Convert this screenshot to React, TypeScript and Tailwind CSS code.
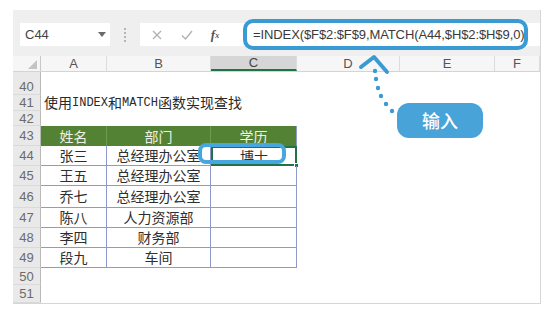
const cjk = '[font-family:"Noto_Sans_CJK_SC","Liberation_Sans",sans-serif]';

const colHeads = [
  { label: 'A', w: 'w-[66px]' },
  { label: 'B', w: 'w-[104px]' },
  { label: 'C', w: 'w-[86px]', active: true },
  { label: 'D', w: 'w-[103px]' },
  { label: 'E', w: 'w-[95px]' },
  { label: 'F', w: 'w-[45px]' },
];

const people = [
  { n: 44, name: '张三', dept: '总经理办公室', edu: '博士', h: 'h-[20px]' },
  { n: 45, name: '王五', dept: '总经理办公室', edu: '', h: 'h-[20px]' },
  { n: 46, name: '乔七', dept: '总经理办公室', edu: '', h: 'h-[22px]' },
  { n: 47, name: '陈八', dept: '人力资源部', edu: '', h: 'h-[20px]' },
  { n: 48, name: '李四', dept: '财务部', edu: '', h: 'h-[20px]' },
  { n: 49, name: '段九', dept: '车间', edu: '', h: 'h-[20px]' },
];

function RowNum({ n, end }: { n: number; end?: boolean }) {
  return (
    <div
      className={`w-[28px] shrink-0 h-full flex justify-center ${end ? 'items-end pb-[1px]' : 'items-center'} bg-[#e9e9e9] border-r border-[#b9b9b9] border-b border-b-[#dadada] text-[13px] leading-none text-[#6b6b6b] [font-family:"Liberation_Sans",sans-serif]`}
    >
      {n}
    </div>
  );
}

export default function App() {
  return (
    <div className="relative w-[554px] h-[314px] bg-white overflow-hidden">
      <div className="absolute left-[13px] top-[10px] w-[528px] h-[294px] flex flex-col border-r border-b border-[#d6d6d6] bg-white">
        {/* formula bar */}
        <div className="h-[46px] shrink-0 bg-[#efefef] flex items-start pt-[13px] pl-[7px]">
          <div className="w-[90px] h-[23px] bg-white flex items-center justify-between pl-[5px] pr-[4px] text-[13px] text-[#444] [font-family:'Liberation_Sans',sans-serif]">
            <span>C44</span>
            <svg width="8" height="5" viewBox="0 0 8 5"><path d="M0 0h8L4 5z" fill="#6a6a6a" /></svg>
          </div>
          <div className="w-[30px] h-[23px] flex flex-col items-center justify-center gap-[2px]">
            <span className="w-[2px] h-[2px] bg-[#b5b5b5]" />
            <span className="w-[2px] h-[2px] bg-[#b5b5b5]" />
            <span className="w-[2px] h-[2px] bg-[#b5b5b5]" />
            <span className="w-[2px] h-[2px] bg-[#b5b5b5]" />
          </div>
          <div className="flex-1 h-[23px] bg-white flex items-center">
            <div className="w-[33px] flex justify-center">
              <svg width="10" height="10" viewBox="0 0 10 10"><path d="M1 1l8 8M9 1l-8 8" stroke="#b0b0b0" strokeWidth="1.3" /></svg>
            </div>
            <div className="w-[28px] flex justify-center">
              <svg width="12" height="10" viewBox="0 0 12 10"><path d="M1 5.5l3.5 3.5L11 1" fill="none" stroke="#b0b0b0" strokeWidth="1.3" /></svg>
            </div>
            <div className="w-[28px] flex justify-center items-end text-[#555] [font-family:'Liberation_Serif',serif] italic font-bold leading-none">
              <span className="text-[13px]">f</span>
              <span className="text-[8px] mb-[1px]">x</span>
            </div>
            <span className="ml-[24px] text-[13px] text-[#3a3a3a] whitespace-nowrap [font-family:'Liberation_Sans',sans-serif] tracking-[-0.1px]">
              =INDEX($F$2:$F$9,MATCH(A44,$H$2:$H$9,0)
            </span>
          </div>
        </div>

        {/* column headers */}
        <div className="h-[16px] shrink-0 flex bg-[#f6f6f6] border-b border-[#d4d4d4] text-[13px] leading-none text-[#555] [font-family:'Liberation_Sans',sans-serif]">
          <div className="w-[28px] shrink-0 relative border-r border-[#c8c8c8]">
            <svg className="absolute right-[3px] bottom-[2px]" width="9" height="9" viewBox="0 0 9 9"><path d="M9 0v9H0z" fill="#c4c4c4" /></svg>
          </div>
          {colHeads.map((c) => (
            <div
              key={c.label}
              className={`${c.w} shrink-0 flex items-center justify-center border-r border-[#dcdcdc] ${c.active ? 'bg-[#d6d6d6] border-b-2 border-b-[#217346] text-[#444]' : ''}`}
            >
              {c.label}
            </div>
          ))}
        </div>

        {/* rows 40-42 */}
        <div className="h-[23px] flex">
          <RowNum n={40} end />
        </div>
        <div className="h-[16px] flex">
          <RowNum n={41} />
          <div className={`flex-1 pl-[3px] flex items-center text-[14px] text-[#2a2a2a] whitespace-nowrap ${cjk}`}>
            使用<span className="[font-family:'Liberation_Mono',monospace] text-[12px]">INDEX</span>和<span className="[font-family:'Liberation_Mono',monospace] text-[12px]">MATCH</span>函数实现查找
          </div>
        </div>
        <div className="h-[16px] flex">
          <RowNum n={42} />
        </div>

        {/* table header */}
        <div className={`h-[20px] flex text-[14px] ${cjk}`}>
          <RowNum n={43} />
          <div className="w-[66px] bg-[#548235] border-r border-[#6f9a52] text-[#edf3e6] flex items-center justify-center">姓名</div>
          <div className="w-[104px] bg-[#548235] border-r border-[#6f9a52] text-[#edf3e6] flex items-center justify-center">部门</div>
          <div className="w-[86px] bg-[#548235] border-r border-[#8e9acb] text-[#edf3e6] flex items-center justify-center">学历</div>
        </div>

        {people.map((p) => (
          <div key={p.n} className={`${p.h} flex text-[14px] text-[#2e2e2e] ${cjk}`}>
            <RowNum n={p.n} />
            <div className="w-[66px] border-r border-b border-[#8e9acb] flex items-center justify-center">{p.name}</div>
            <div className="w-[104px] border-r border-b border-[#8e9acb] flex items-center justify-center">{p.dept}</div>
            <div
              className={`w-[86px] flex items-center justify-center relative ${p.n === 44 ? 'border-2 border-[#217346]' : 'border-r border-b border-[#8e9acb]'}`}
            >
              {p.edu}
              {p.n === 44 && <span className="absolute -right-[4px] -bottom-[4px] w-[5px] h-[5px] bg-[#217346] border border-white" />}
            </div>
          </div>
        ))}

        <div className="h-[17px] flex">
          <RowNum n={50} />
        </div>
        <div className="h-[18px] flex">
          <RowNum n={51} />
        </div>
      </div>

      {/* annotation overlays */}
      <div className="absolute left-[243px] top-[19px] w-[285px] h-[31px] rounded-[10px] border-[4px] border-[#3a9ad3]" />
      <div className="absolute left-[198px] top-[143px] w-[88px] h-[21px] rounded-[8px] border-[4px] border-[#47a6de]" />
      <svg className="absolute left-0 top-0" width="554" height="314" viewBox="0 0 554 314">
        <path d="M361 67L374 57L387 72" fill="none" stroke="#3a9ad3" strokeWidth="4" strokeLinecap="round" strokeLinejoin="round" />
        {[
          [375, 71],
          [376, 79],
          [378, 88],
          [381, 96],
          [386, 104],
          [392, 111],
        ].map(([cx, cy]) => (
          <circle key={cy} cx={cx} cy={cy} r="2.2" fill="#3a9ad3" />
        ))}
      </svg>
      <div className={`absolute left-[397px] top-[103px] w-[86px] h-[35px] rounded-[12px] bg-[#48a3d9] flex items-center justify-center text-white text-[18px] font-medium ${cjk}`}>
        输入
      </div>
    </div>
  );
}
